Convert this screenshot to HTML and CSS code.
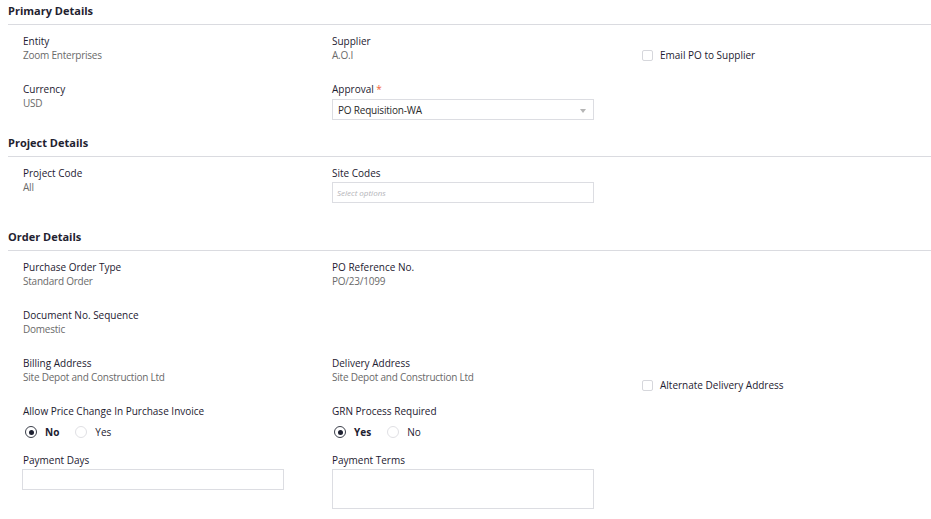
FILE: index.html
```html
<!DOCTYPE html>
<html lang="en">
<head>
<meta charset="utf-8">
<title>Purchase Order</title>
<link rel="stylesheet" href="styles.css">
</head>
<body>
<div class="page">
  <section class="section">
    <h2 class="section-title">Primary Details</h2>
    <div class="section-body">
      <div class="row">
        <div class="field"><div class="label">Entity</div><div class="value">Zoom Enterprises</div></div>
        <div class="field"><div class="label">Supplier</div><div class="value">A.O.I</div></div>
        <label class="check-field"><span class="checkbox"></span><span class="check-text">Email PO to Supplier</span></label>
      </div>
      <div class="row">
        <div class="field"><div class="label">Currency</div><div class="value">USD</div></div>
        <div class="field">
          <div class="label">Approval <span class="req">*</span></div>
          <div class="select"><span class="select-text">PO Requisition-WA</span><span class="caret"></span></div>
        </div>
      </div>
    </div>
  </section>

  <section class="section section--project">
    <h2 class="section-title">Project Details</h2>
    <div class="section-body">
      <div class="row">
        <div class="field"><div class="label">Project Code</div><div class="value">All</div></div>
        <div class="field">
          <div class="label">Site Codes</div>
          <div class="input input--site"><span class="placeholder">Select options</span></div>
        </div>
      </div>
    </div>
  </section>

  <section class="section section--order">
    <h2 class="section-title">Order Details</h2>
    <div class="section-body">
      <div class="row">
        <div class="field"><div class="label">Purchase Order Type</div><div class="value">Standard Order</div></div>
        <div class="field"><div class="label">PO Reference No.</div><div class="value">PO/23/1099</div></div>
      </div>
      <div class="row">
        <div class="field"><div class="label">Document No. Sequence</div><div class="value">Domestic</div></div>
      </div>
      <div class="row">
        <div class="field"><div class="label">Billing Address</div><div class="value">Site Depot and Construction Ltd</div></div>
        <div class="field"><div class="label">Delivery Address</div><div class="value">Site Depot and Construction Ltd</div></div>
        <label class="check-field check-field--low"><span class="checkbox"></span><span class="check-text">Alternate Delivery Address</span></label>
      </div>
      <div class="row">
        <div class="field">
          <div class="label">Allow Price Change In Purchase Invoice</div>
          <div class="radios">
            <span class="radio radio--on"><span class="dot"></span><span class="radio-text">No</span></span>
            <span class="radio"><span class="dot"></span><span class="radio-text">Yes</span></span>
          </div>
        </div>
        <div class="field">
          <div class="label">GRN Process Required</div>
          <div class="radios">
            <span class="radio radio--on"><span class="dot"></span><span class="radio-text">Yes</span></span>
            <span class="radio"><span class="dot"></span><span class="radio-text">No</span></span>
          </div>
        </div>
      </div>
      <div class="row row--tight">
        <div class="field">
          <div class="label">Payment Days</div>
          <div class="input input--days"></div>
        </div>
        <div class="field">
          <div class="label">Payment Terms</div>
          <div class="input input--area"></div>
        </div>
      </div>
    </div>
  </section>
</div>
</body>
</html>
```

FILE: styles.css
```css
* { box-sizing: border-box; }
html, body { margin: 0; padding: 0; background: #fff; }
body {
  font-family: "Open Sans", "Noto Sans", sans-serif;
  font-size: 10px;
  color: #1d2030;
}
.page { padding: 0 0 0 8px; }

.section-title {
  margin: 0;
  padding-top: 3px;
  height: 25px;
  line-height: 15px;
  font-size: 11px;
  font-weight: 700;
  color: #1f2230;
  border-bottom: 1px solid #dadbe0;
}
.section-body { padding: 9px 0 0 15px; }
.section--project { margin-top: 12px; }
.section--order { margin-top: 23px; }

.row {
  display: grid;
  grid-template-columns: 309px 310px 1fr;
  align-items: start;
}
.row + .row { margin-top: 20px; }
.row + .row--tight { margin-top: 14px; }

.label {
  line-height: 14px;
  color: #1d2030;
}
.value {
  line-height: 14px;
  letter-spacing: -0.23px;
  color: #6a6a6a;
}
.req { color: #f0623a; }

.select, .input {
  border: 1px solid #dcdde2;
  background: #fff;
  width: 262px;
}
.select {
  margin-top: 3px;
  height: 21px;
  display: flex;
  align-items: center;
  justify-content: space-between;
  padding: 0 7px 0 5px;
}
.select-text { color: #2a2a2a; letter-spacing: -0.2px; }
.caret {
  width: 0; height: 0;
  border-left: 3px solid transparent;
  border-right: 3px solid transparent;
  border-top: 4px solid #b5b5b5;
  margin-top: 2px;
}
.input { margin-top: 2px; height: 21px; }
.input--site { display: flex; align-items: center; padding-left: 4px; }
.placeholder { font-size: 8px; font-style: italic; color: #b3b3b8; }
.input--days { margin-left: -1px; }
.input--area { height: 40px; }

.check-field {
  display: flex;
  align-items: center;
  padding-top: 14px;
  line-height: 14px;
}
.check-field--low { padding-top: 22px; margin-bottom: -8px; }
.checkbox {
  width: 11px; height: 11px;
  border: 1px solid #d6d7dc;
  border-radius: 2px;
  margin-right: 7px;
  background: #fff;
}
.check-text { color: #1d2030; }

.radios {
  display: flex;
  align-items: center;
  margin-top: 7px;
  margin-left: 2px;
  height: 14px;
}
.radio { display: flex; align-items: center; margin-right: 16px; }
.dot {
  width: 12px; height: 12px;
  border-radius: 50%;
  border: 1px solid #e0e0e4;
  margin-right: 8px;
  display: flex; align-items: center; justify-content: center;
}
.radio--on .dot { border: 1.5px solid #3b3f4a; }
.radio--on .dot::after {
  content: "";
  width: 5px; height: 5px;
  border-radius: 50%;
  background: #1d2030;
}
.radio-text { color: #1d2030; }
.radio--on .radio-text { font-weight: 700; }
```
